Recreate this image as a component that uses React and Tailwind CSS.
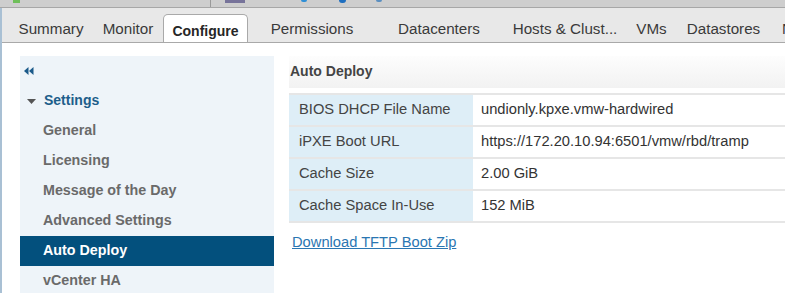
import React from "react";

const tabs = [
  { label: "Summary", w: "w-[84px] justify-center" },
  { label: "Monitor", w: "w-[70px] justify-center" },
  { label: "Configure", w: "w-[85px] justify-center", active: true },
  { label: "Permissions", w: "w-[128px] justify-center" },
  { label: "Datacenters", w: "w-[126px] justify-center" },
  { label: "Hosts & Clust...", w: "w-[126px] justify-center" },
  { label: "VMs", w: "w-[47px] justify-center" },
  { label: "Datastores", w: "w-[97px] justify-center" },
  { label: "N", w: "w-[40px] justify-start pl-[10px]" },
];

const navItems = [
  "General",
  "Licensing",
  "Message of the Day",
  "Advanced Settings",
  "Auto Deploy",
  "vCenter HA",
];

const rows = [
  ["BIOS DHCP File Name", "undionly.kpxe.vmw-hardwired"],
  ["iPXE Boot URL", "https://172.20.10.94:6501/vmw/rbd/tramp"],
  ["Cache Size", "2.00 GiB"],
  ["Cache Space In-Use", "152 MiB"],
];

export default function App() {
  return (
    <div className="w-[785px] h-[293px] overflow-hidden bg-white font-['Liberation_Sans',Arial,sans-serif]">
      {/* top toolbar strip (cut off) */}
      <div className="h-[8px] bg-[#cecece] border-b border-[#a7a7a7] flex items-start relative">
        <div className="ml-[13px] w-[7px] h-[3px] bg-[#6fbf5a]" />
        <div className="ml-[190px] w-px h-[7px] bg-[#9a9a9a]" />
        <div className="ml-[14px] w-[20px] h-[3px] bg-[#77739a]" />
        <div className="ml-[56px] w-[6px] h-[2px] rounded-b-full bg-[#2f8fd6]" />
        <div className="ml-[32px] w-[7px] h-[3px] rounded-b-full bg-[#1f6fc0]" />
        <div className="ml-[30px] w-[6px] h-[2px] rounded-b-full bg-[#5b8fc0]" />
      </div>

      <div className="border-l-2 border-[#a9c0d4] h-[285px]">
        {/* tab bar */}
        <div className="h-[35px] bg-[#e8e8e8] border-b border-[#a9a9a9] flex items-end pl-[7px] overflow-hidden">
          {tabs.map((t) =>
            t.active ? (
              <div
                key={t.label}
                className={`${t.w} shrink-0 h-[29px] -mb-px bg-white border border-b-0 border-[#a9a9a9] rounded-t-[5px] flex items-center text-[14px] font-bold text-[#262626] pt-[4px]`}
              >
                {t.label}
              </div>
            ) : (
              <div
                key={t.label}
                className={`${t.w} shrink-0 h-[29px] flex items-center text-[15.2px] text-[#3a3a3a] pt-[4px] whitespace-nowrap`}
              >
                {t.label}
              </div>
            )
          )}
        </div>

        {/* body */}
        <div className="flex pt-[13px]">
          {/* sidebar */}
          <div className="ml-[18px] w-[254px] shrink-0 h-[240px] bg-[#eef4f9]">
            <div className="h-[30px] flex items-center pl-[4px]">
              <svg width="10" height="8" viewBox="0 0 10 8">
                <polygon points="4.5,0 4.5,8 0,4" fill="#1b5a8a" />
                <polygon points="9.5,0 9.5,8 5,4" fill="#1b5a8a" />
              </svg>
            </div>
            <div className="h-[30px] flex items-center pl-[7px] pb-[1px]">
              <svg width="9" height="5" viewBox="0 0 9 5" className="mt-[2px]">
                <polygon points="0,0 9,0 4.5,5" fill="#555" />
              </svg>
              <span className="ml-[8px] text-[14px] font-bold text-[#1d5e8b]">Settings</span>
            </div>
            {navItems.map((n) => (
              <div
                key={n}
                className={`h-[30px] flex items-center pl-[23px] text-[14.3px] font-bold ${
                  n === "Auto Deploy" ? "bg-[#03507d] text-white" : "text-[#6a6a6a]"
                }`}
              >
                {n}
              </div>
            ))}
          </div>

          {/* content */}
          <div className="ml-[15px] flex-1 min-w-0">
            <div className="h-[32px] bg-gradient-to-b from-[#fdfdfd] to-[#f2f2f2] flex items-center pl-[1px] pb-[1px] text-[14px] font-bold text-[#444]">
              Auto Deploy
            </div>
            <div className="mt-[5px] border-t-2 border-[#e6e6e6]">
              {rows.map(([k, v]) => (
                <div key={k} className="flex h-[32px] border-b-2 border-[#e6e6e6]">
                  <div className="w-[184px] shrink-0 bg-[#deeef7] flex items-center pl-[10px] pb-[2px] text-[14.7px] text-[#444]">
                    {k}
                  </div>
                  <div className="flex-1 flex items-center pl-[8px] pb-[2px] text-[14.7px] text-[#333] whitespace-nowrap">
                    {v}
                  </div>
                </div>
              ))}
            </div>
            <div className="mt-[7px] pl-[3px]">
              <a className="text-[14.7px] text-[#2a76b2] underline cursor-pointer">Download TFTP Boot Zip</a>
            </div>
          </div>
        </div>
      </div>
    </div>
  );
}
